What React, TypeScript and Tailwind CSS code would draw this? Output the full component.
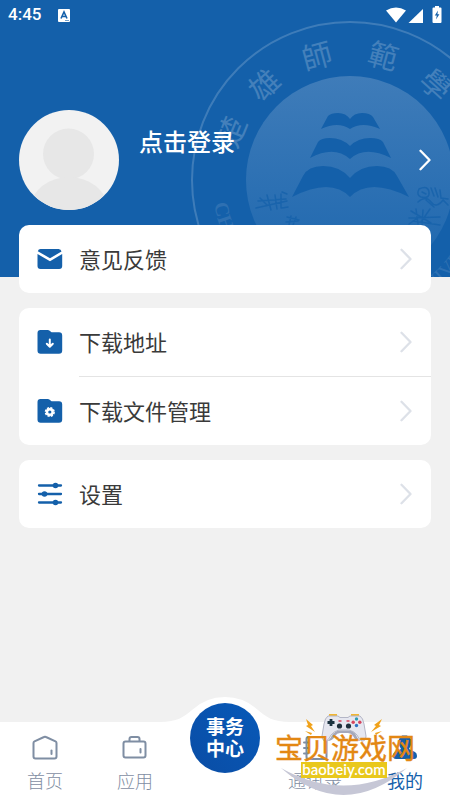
import React from 'react';

interface MenuItem {
  key: string;
  label: string;
  icon: React.ReactNode;
}

interface Tab {
  key: string;
  label: string;
  active?: boolean;
  icon: React.ReactNode;
}

const MailIcon: React.FC = () => (
  <svg width="26" height="26" viewBox="0 0 26 26" fill="#1460aa" aria-hidden="true">
    <path d="M4 3h17.5a3 3 0 0 1 3 2.6L13 12.2 .8 5.2A3 3 0 0 1 4 3z" />
    <path d="M.5 8l12.500 7.200L25.200 8v12a3 3 0 0 1-3 3H3.500a3 3 0 0 1-3-3z" />
  </svg>
);

const FolderShape: React.FC = () => (
  <path
    d="M3.500 1h7.200q1.200 0 2 .8l1.200 1q.6.500 1.400.500H22a3.200 3.200 0 0 1 3.200 3.200V21.500a3.200 3.200 0 0 1-3.200 3.200H3.700A3.200 3.200 0 0 1 .5 21.500V4a3 3 0 0 1 3-3z"
    fill="#1460aa"
  />
);

const FolderDownIcon: React.FC = () => (
  <svg width="26" height="26" viewBox="0 0 26 26" aria-hidden="true">
    <FolderShape />
    <path d="M12.800 10.500v7M9.800 14.800l3 3 3-3" fill="none" stroke="#fff" strokeWidth="2" strokeLinecap="round" strokeLinejoin="round" />
  </svg>
);

const FolderGearIcon: React.FC = () => (
  <svg width="26" height="26" viewBox="0 0 26 26" aria-hidden="true">
    <FolderShape />
    <circle cx="12.800" cy="14" r="4" fill="#fff" />
    <circle cx="12.800" cy="14" r="4.300" fill="none" stroke="#fff" strokeWidth="1.600" strokeDasharray="2.200 1.170" />
    <circle cx="12.800" cy="14" r="1.600" fill="#1460aa" />
  </svg>
);

const SlidersIcon: React.FC = () => (
  <svg width="26" height="26" viewBox="0 0 26 26" fill="#1460aa" aria-hidden="true">
    <path d="M2 4.500h22M2 13h22M2 21.500h22" stroke="#1460aa" strokeWidth="2.300" strokeLinecap="round" />
    <circle cx="18.500" cy="4.500" r="2.800" />
    <circle cx="7.500" cy="13" r="2.800" />
    <circle cx="18.500" cy="21.500" r="2.800" />
  </svg>
);

const Chevron: React.FC<{ className: string }> = ({ className }) => (
  <svg width="12" height="22" viewBox="0 0 12 22" fill="none" className={className} aria-hidden="true">
    <path d="M1.500 1.800l9 9.200-9 9.200" stroke="currentColor" strokeWidth="2.300" strokeLinecap="round" strokeLinejoin="round" />
  </svg>
);

const menuGroups: MenuItem[][] = [
  [{ key: 'feedback', label: '意见反馈', icon: <MailIcon /> }],
  [
    { key: 'download', label: '下载地址', icon: <FolderDownIcon /> },
    { key: 'files', label: '下载文件管理', icon: <FolderGearIcon /> },
  ],
  [{ key: 'settings', label: '设置', icon: <SlidersIcon /> }],
];

const leftTabs: Tab[] = [
  {
    key: 'home',
    label: '首页',
    icon: (
      <svg width="28" height="28" viewBox="0 0 28 28" fill="none" stroke="currentColor" strokeWidth="2" strokeLinecap="round" strokeLinejoin="round" aria-hidden="true">
        <path d="M2.500 9q0-1.200 1-1.700L13 3q1-.5 2 0l9.500 4.300q1 .5 1 1.700v13.500a2 2 0 0 1-2 2h-19a2 2 0 0 1-2-2z" />
        <path d="M20.500 16.500v3.500" />
      </svg>
    ),
  },
  {
    key: 'apps',
    label: '应用',
    icon: (
      <svg width="28" height="28" viewBox="0 0 28 28" fill="none" stroke="currentColor" strokeWidth="2" strokeLinecap="round" strokeLinejoin="round" aria-hidden="true">
        <rect x="2.500" y="7.500" width="22" height="16" rx="2" />
        <path d="M8.500 7V5a2 2 0 0 1 2-2h6a2 2 0 0 1 2 2v2M19.500 15v3.500" />
      </svg>
    ),
  },
];

const rightTabs: Tab[] = [
  {
    key: 'contacts',
    label: '通讯录',
    icon: (
      <svg width="28" height="28" viewBox="0 0 28 28" fill="none" stroke="currentColor" strokeWidth="2" strokeLinecap="round" strokeLinejoin="round" aria-hidden="true">
        <rect x="5.500" y="3" width="20" height="22" rx="2" />
        <path d="M3 8.500h4M3 14h4M3 19.500h4" />
      </svg>
    ),
  },
  {
    key: 'me',
    label: '我的',
    active: true,
    icon: (
      <svg width="28" height="28" viewBox="0 0 28 28" fill="currentColor" aria-hidden="true">
        <path d="M11 1.500h5l4 3.500v6l-2 4 6 3q2 1 2 4 0 3-3 3H5q-3 0-3-3 0-3 2-4l6-3-2-4V5z" />
      </svg>
    ),
  },
];

const StatusBar: React.FC = () => (
  <div className="flex h-[30px] items-center pr-2 pl-2 text-white">
    <span className="font-[Roboto,sans-serif] text-[17px] font-medium">4:45</span>
    <svg width="12" height="13" viewBox="0 0 12 13" className="ml-[17px]" aria-hidden="true">
      <rect width="12" height="13" rx="1" fill="#fff" />
      <path d="M3 9.500L6 3l3 6.500M4.200 7.500h3.600" fill="none" stroke="#1460aa" strokeWidth="1.600" />
      <path d="M7 11.500h4" stroke="#1460aa" strokeWidth=".6" />
    </svg>
    <svg width="56" height="18" viewBox="0 0 56 18" fill="#fff" className="ml-auto" aria-hidden="true">
      <path d="M0 4.500Q10 -1.500 20 4.500L10 16.500z" />
      <path d="M37 3v14H22.500z" />
      <path d="M49 0h4v1.500h1.500q1 0 1 1V16q0 1-1 1h-7q-1 0-1-1V2.500q0-1 1-1H49z" />
      <path d="M52 4.500l-3.200 5h2l-.8 4 3.400-5.200h-2z" fill="#1460aa" />
    </svg>
  </div>
);

const sealChars = [
  { char: '楚', angle: -68 },
  { char: '雄', angle: -42 },
  { char: '師', angle: -15 },
  { char: '範', angle: 15 },
  { char: '學', angle: 42 },
];

const Seal: React.FC = () => (
  <svg width="320" height="320" viewBox="0 0 320 320" className="absolute top-5 left-[190px]" aria-hidden="true">
    <defs>
      <linearGradient id="disc" x1="0" y1="0" x2="0" y2="1">
        <stop offset="0" stopColor="#3f7cb9" />
        <stop offset="1" stopColor="#1c66ae" />
      </linearGradient>
      <path id="ring" d="M22 160a138 138 0 0 0 276 0" />
    </defs>
    <circle cx="160" cy="160" r="158" fill="none" stroke="#fff" strokeOpacity=".18" strokeWidth="2" />
    <circle cx="160" cy="160" r="104" fill="url(#disc)" />
    <g fill="#4480bb" fontSize="30" textAnchor="middle" className="font-['Noto_Sans_CJK_TC',sans-serif]">
      {sealChars.map(({ char, angle }) => (
        <text key={char} x="160" y="43" transform={`rotate(${angle} 160 160)`}>
          {char}
        </text>
      ))}
    </g>
    <g fill="#2e70b2" fontSize="20" className="font-['Liberation_Serif',serif]">
      <text fontWeight="700">
        <textPath href="#ring" startOffset="24">CHUXIONG</textPath>
      </text>
      <text>
        <textPath href="#ring" startOffset="288">UNIVERSITY</textPath>
      </text>
    </g>
    <g fill="#1460aa">
      <path d="M131 109l7-13q3-3 10-3 8 0 12 6 4-6 12-6 8 0 11 4l7 12q-18-8-30 0-12-8-29 0z" />
      <path d="M120 138l8-16q3-4 12-4 12 0 20 8 8-8 20-8 10 0 13 4l8 16q-26-13-41 1-16-14-40-1z" />
      <path d="M102 177l11-21q5-10 20-10 17 0 27 12 10-12 27-12 15 0 20 10l12 21q-40-20-59 0-19-20-58 0z" />
    </g>
    <g fill="none" stroke="#1460aa" strokeOpacity=".75" strokeWidth="1.500" strokeLinecap="round">
      <path d="M68 181l28-2M66 188l31-7M77 175l4 15M85 175l2 14M91 174v14M92 172l5 2M70 178l7 7M92 188l6-1" />
      <path d="M97 197l12 3M96 202l12-1M101 196l-2 9M106 197l-3 8" />
      <path d="M229 169q9-4 10 3t-8 5q-5-2-2-8zM232 172l4 2M241 168l3 8M245 168l3 9M250 170l1 8 7 1M228 182q8-7 13 0t12-2l5 5M236 180l8 7" />
      <path d="M221 191l20 12M219 198l31-1M226 189l2 15M233 190l-1 15M240 189l-9 13M223 201l27 4M219 204l10-7" />
    </g>
  </svg>
);

const Profile: React.FC = () => (
  <button type="button" className="mt-20 flex w-full items-start pr-[19px] pl-[19px] text-left text-white">
    <svg width="100" height="100" viewBox="0 0 100 100" className="shrink-0" aria-hidden="true">
      <defs>
        <clipPath id="avatar">
          <circle cx="50" cy="50" r="50" />
        </clipPath>
      </defs>
      <g clipPath="url(#avatar)">
        <rect width="100" height="100" fill="#f2f2f2" />
        <circle cx="49.500" cy="44" r="25.500" fill="#e7e7e7" />
        <path d="M8 100Q18 68 50 67q32 1 42 33z" fill="#e7e7e7" />
      </g>
    </svg>
    <span className="mt-[13px] ml-5 text-2xl leading-9 font-medium">点击登录</span>
    <Chevron className="ml-auto self-center text-white" />
  </button>
);

const TabButton: React.FC<{ tab: Tab }> = ({ tab }) => (
  <button
    type="button"
    aria-current={tab.active ? 'page' : undefined}
    className={`flex flex-col items-center pt-3 ${tab.active ? 'text-[#1460aa]' : 'text-[#7f8ea3]'}`}
  >
    {tab.icon}
    <span className={`mt-1.5 text-lg leading-6 ${tab.active ? 'font-normal' : 'font-light'}`}>{tab.label}</span>
  </button>
);

const SiteMark: React.FC = () => (
  <svg width="142" height="86" viewBox="0 0 142 86" className="pointer-events-none absolute right-[34px] bottom-0" role="img" aria-label="宝贝游戏网 baobeiy.com">
    {/* crescent under the name */}
    <path d="M7 54Q69 108 133 54 69 89 7 54z" fill="#c6c7d6" />
    {/* sparks */}
    <g fill="#f0a21b">
      <path d="M32 5l7 6-2 1 4 6-9-6 2-1zM31 17l7 2-1 2zM108 5l-8 6 2 1-5 6 10-6-2-1zM108 17l-7 2 1 2z" />
    </g>
    {/* game controller */}
    <g transform="translate(70 0)">
      <path d="M-15 1h8M7 1h8" stroke="#f2b632" strokeWidth="2" />
      <path d="M-16 2h10l2 1.500h8L6 2h10q3 2 4 8l2 12q0 5-4 5-3-1-5-6-3-4-8-5h-10q-5 1-8 5-2 5-5 6-4 0-4-5l2-12q1-6 4-8z" fill="#e6e7f0" stroke="#b4b6c6" strokeWidth="1" />
      <path d="M-17 27q3-1 5-6 3-4 7-4.500H5q5 .5 7 4.500 2 5 5 6-6 0-8-5-2-3-5-3h-8q-3 0-5 3-2 5-8 5z" fill="#a5a8ba" />
      <path d="M-13 5v7M-16.500 8.500h7" stroke="#1d3340" strokeWidth="2.800" />
      <circle cx="-4.500" cy="12" r="2.600" fill="#20303d" />
      <circle cx="4.500" cy="12" r="2.600" fill="#20303d" />
      <path d="M-5.500 7h3M2.500 7h3" stroke="#d6455e" strokeWidth="1.500" />
      <circle cx="12.500" cy="5" r="1.700" fill="#2f9cb4" />
      <circle cx="12.500" cy="11.500" r="1.700" fill="#2f73c4" />
      <circle cx="9.200" cy="8.300" r="1.700" fill="#d6455e" />
      <circle cx="15.800" cy="8.300" r="1.700" fill="#d6455e" />
    </g>
    <text x="1" y="45" fontSize="28" fill="#e38713" stroke="#e38713" strokeWidth=".4">
      宝贝游戏网
    </text>
    <rect x="27" y="48" width="86" height="16" fill="#e9c81c" />
    <text x="70" y="61" fontSize="15" fontWeight="600" textAnchor="middle" fill="#fff" className="font-[Lato,sans-serif]">
      baobeiy.com
    </text>
  </svg>
);

const App: React.FC = () => {
  return (
    <div className="flex min-h-screen flex-col bg-[#f1f1f1] font-['Noto_Sans_CJK_SC',sans-serif]">
      <header className="relative overflow-hidden bg-[#1460aa] pb-[67px]">
        <Seal />
        <div className="relative">
          <StatusBar />
          <Profile />
        </div>
      </header>

      <main className="relative -mt-[52px] flex flex-col gap-[15px] px-[19px] pb-10">
        {menuGroups.map((group) => (
          <ul key={group[0].key} className="overflow-hidden rounded-[10px] bg-white">
            {group.map((item, index) => (
              <li key={item.key}>
                {index > 0 && <div className="ml-[60px] h-px bg-[#e4e4e4]" />}
                <button type="button" className="flex h-[68px] w-full items-center pr-[19px] pl-[18px] text-left">
                  {item.icon}
                  <span className="ml-4 pb-0.5 text-[22px] leading-8 text-[#3a3a3a]">{item.label}</span>
                  <Chevron className="ml-auto text-[#dde1e8]" />
                </button>
              </li>
            ))}
          </ul>
        ))}
      </main>

      <nav className="relative mt-auto grid h-[78px] grid-cols-5 bg-white">
        {leftTabs.map((tab) => (
          <TabButton key={tab.key} tab={tab} />
        ))}
        <div className="relative flex justify-center">
          <svg width="130" height="26" viewBox="0 0 130 26" className="absolute -top-[25px] left-1/2 -translate-x-1/2" aria-hidden="true">
            <path d="M0 25c17 0 24-5 32-12Q46 0 65 0t33 13c8 7 15 12 32 12v1H0z" fill="#fff" />
          </svg>
          <button
            type="button"
            className="relative -mt-[19px] flex size-[70px] shrink-0 flex-col items-center justify-center rounded-full bg-linear-to-tr from-[#0a4da5] to-[#0759b8] pb-0.5 text-[19px] leading-[22px] font-bold text-white"
          >
            <span>事务</span>
            <span>中心</span>
          </button>
        </div>
        {rightTabs.map((tab) => (
          <TabButton key={tab.key} tab={tab} />
        ))}
        <SiteMark />
      </nav>
    </div>
  );
};

export default App;
